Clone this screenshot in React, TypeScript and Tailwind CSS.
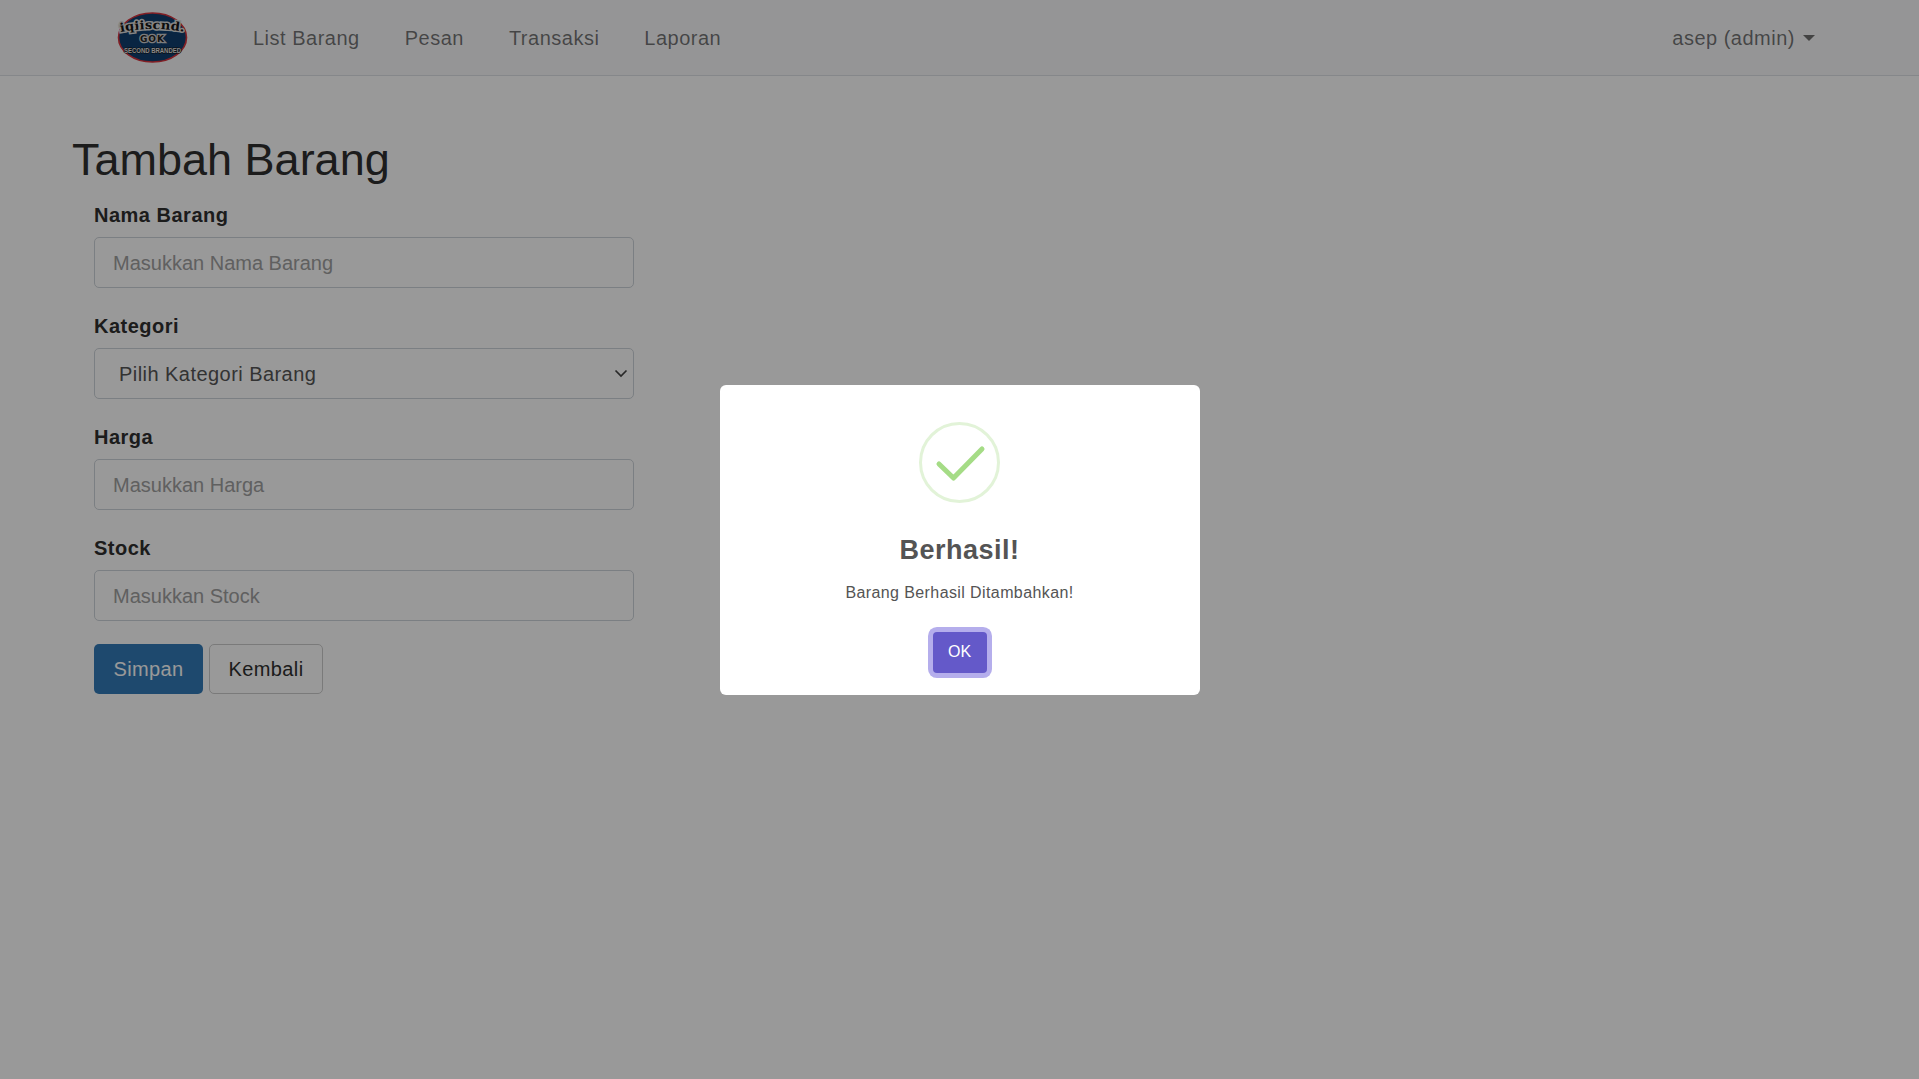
const FONT = "font-['Liberation_Sans',Arial,sans-serif]";

const NAV_LINKS = ["List Barang", "Pesan", "Transaksi", "Laporan"];

function Logo() {
  return (
    <svg width="71" height="51" viewBox="0 0 71 51" className="block overflow-visible">
      <ellipse cx="35.5" cy="25.5" rx="34" ry="24.5" fill="#0f3f6e" stroke="#d8333d" strokeWidth="1.6" />
      <path id="logo-arc" d="M3.5 20 Q35.5 14 68 20" fill="none" />
      <text
        fontFamily="'DejaVu Serif', serif"
        fontWeight="700"
        fontSize="12"
        fill="#151515"
        stroke="#dcdcdc"
        strokeWidth="3"
        paintOrder="stroke"
      >
        <textPath href="#logo-arc" textLength="64" lengthAdjust="spacingAndGlyphs">
          iqiiscnd.
        </textPath>
      </text>
      <text
        x="35.5"
        y="30"
        textAnchor="middle"
        fontFamily="'DejaVu Sans', sans-serif"
        fontWeight="700"
        fontSize="9"
        letterSpacing="1"
        fill="#222"
        stroke="#cfcfcf"
        strokeWidth="2.5"
        paintOrder="stroke"
      >
        GOK
      </text>
      <text
        x="7"
        y="40.5"
        textLength="57"
        lengthAdjust="spacingAndGlyphs"
        fontFamily="'Liberation Sans', sans-serif"
        fontWeight="700"
        fontSize="6.5"
        fill="#e5e5e5"
        stroke="#111"
        strokeWidth="1"
        paintOrder="stroke"
      >
        SECOND BRANDED
      </text>
    </svg>
  );
}

function Field({ label, placeholder }: { label: string; placeholder: string }) {
  return (
    <div className="mb-[23px]">
      <label className="block h-[30px] mb-[7px] text-[20px] leading-[30px] font-bold tracking-[0.5px]">{label}</label>
      <input
        type="text"
        placeholder={placeholder}
        className="block w-full h-[51px] px-[18px] pt-[1px] rounded-[5px] border border-[#ced4da] bg-white text-[20px] placeholder:text-[#a0a0a0] outline-none"
      />
    </div>
  );
}

export default function App() {
  return (
    <div className={`relative h-screen overflow-hidden bg-white text-[#2f2f2f] ${FONT}`}>
      {/* Navbar */}
      <nav className="flex items-center h-[76px] pl-[117px] pr-[104px] bg-[#f8f9fa] border-b border-[#dee2e6]">
        <Logo />
        <ul className="flex ml-[65px] gap-[45px] text-[20px] tracking-[0.5px] text-black/55">
          {NAV_LINKS.map((link) => (
            <li key={link}>{link}</li>
          ))}
        </ul>
        <div className="flex items-center ml-auto text-[20px] tracking-[0.5px] text-black/55">
          asep (admin)
          <span className="ml-[8px] border-x-[6px] border-t-[6px] border-x-transparent border-t-black/55" />
        </div>
      </nav>

      {/* Form */}
      <main className="pl-[72px] pt-[57px]">
        <h1 className="text-[45px] leading-[54px] font-normal mb-[13px]">Tambah Barang</h1>
        <form className="ml-[22px] w-[540px]">
          <Field label="Nama Barang" placeholder="Masukkan Nama Barang" />
          <div className="mb-[23px]">
            <label className="block h-[30px] mb-[7px] text-[20px] leading-[30px] font-bold tracking-[0.5px]">Kategori</label>
            <div className="relative">
              <select className="block w-full h-[51px] px-[24px] appearance-none rounded-[5px] border border-[#ced4da] bg-white text-[20px] tracking-[0.45px] text-[#555] outline-none">
                <option>Pilih Kategori Barang</option>
              </select>
              <svg
                width="14"
                height="9"
                viewBox="0 0 14 9"
                className="absolute right-[6px] top-[21px] pointer-events-none"
              >
                <path d="M1.5 1.5 L7 7 L12.5 1.5" fill="none" stroke="#444" strokeWidth="1.7" />
              </svg>
            </div>
          </div>
          <Field label="Harga" placeholder="Masukkan Harga" />
          <Field label="Stock" placeholder="Masukkan Stock" />
          <div className="flex gap-[6px]">
            <button type="button" className="h-[50px] w-[109px] rounded-[5px] bg-[#337ab7] text-[20px] tracking-[0.4px] text-white">
              Simpan
            </button>
            <button type="button" className="h-[50px] w-[114px] rounded-[5px] border border-[#ccc] bg-white text-[20px] tracking-[0.4px] text-[#2f2f2f]">
              Kembali
            </button>
          </div>
        </form>
      </main>

      {/* Success dialog */}
      <div className="absolute inset-0 flex items-center justify-center bg-black/40">
        <div className="flex flex-col items-center w-[480px] h-[310px] pt-[37px] rounded-[6px] bg-white">
          <svg width="81" height="81" viewBox="0 0 81 81">
            <circle cx="40.5" cy="40.5" r="39" fill="none" stroke="#e2f3d8" strokeWidth="3" />
            <path d="M20 42 L34.5 56 L63 27" fill="none" stroke="#a5dc86" strokeWidth="5" strokeLinecap="round" strokeLinejoin="round" />
          </svg>
          <h2 className="mt-[31px] text-[27px] leading-[32px] font-bold tracking-[0.5px] text-[#545454]">Berhasil!</h2>
          <p className="mt-[17px] text-[16px] leading-[20px] tracking-[0.4px] text-[#545454]">Barang Berhasil Ditambahkan!</p>
          <button
            type="button"
            className="mt-[29px] w-[54px] h-[41px] rounded-[4px] bg-[#6459c9] text-[16px] text-white ring-[5px] ring-[#b5aeec]"
          >
            OK
          </button>
        </div>
      </div>
    </div>
  );
}
